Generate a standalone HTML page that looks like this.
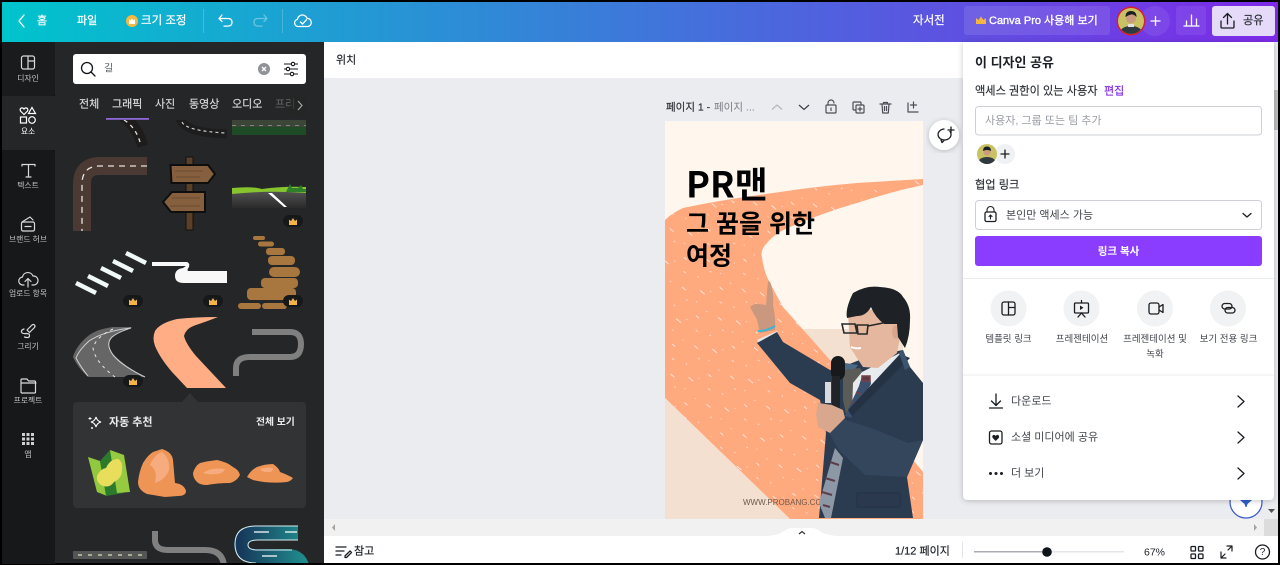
<!DOCTYPE html>
<html lang="ko"><head><meta charset="utf-8"><title>Canva</title>
<style>
html,body{margin:0;padding:0;background:#000;width:1280px;height:565px;overflow:hidden}
svg{display:block;font-family:"Liberation Sans","Noto Sans CJK KR",sans-serif}
text{dominant-baseline:central;transform:translateY(.6px)}
.tw{fill:#fff;stroke:#fff;stroke-width:.2;font-size:11px}
.sl{fill:#c4c5c8;font-size:7.8px;text-anchor:middle}
.tb{fill:#d6d7d9;stroke:#d6d7d9;stroke-width:.15;font-size:11px}
.k{fill:#2a2e33;stroke:#2a2e33;stroke-width:.15;font-size:11.2px}
.t{font-size:11px;fill:#42464c}
.ic{fill:none;stroke:#fff;stroke-width:1.3;stroke-linecap:round;stroke-linejoin:round}
.sb{fill:none;stroke:#d8d9db;stroke-width:1.2;stroke-linecap:round;stroke-linejoin:round}
.d{fill:none;stroke:#1a1d21;stroke-width:1.3;stroke-linecap:round;stroke-linejoin:round}
.g{fill:none;stroke:#4a4e54;stroke-width:1.2;stroke-linecap:round;stroke-linejoin:round}
</style></head><body>
<svg width="1280" height="565" viewBox="0 0 1280 565" xmlns="http://www.w3.org/2000/svg">
<defs>
<linearGradient id="top" x1="0" x2="1" y1="0" y2="0"><stop offset="0" stop-color="#00c4cc"/><stop offset="1" stop-color="#7d2ae8"/></linearGradient>
<linearGradient id="road" x1="0" x2="1" y1="0" y2="0"><stop offset="0" stop-color="#173a5c"/><stop offset="1" stop-color="#1f8a8c"/></linearGradient>
<linearGradient id="land" x1="0" x2="0" y1="0" y2="1"><stop offset="0" stop-color="#555"/><stop offset="1" stop-color="#2a2a2b"/></linearGradient>
<clipPath id="panelclip"><rect x="55" y="120" width="269" height="443"/></clipPath>
<clipPath id="pg"><rect x="665" y="121" width="258" height="398"/></clipPath>
<clipPath id="av1"><circle cx="1131" cy="21" r="13"/></clipPath>
<clipPath id="av2"><circle cx="987" cy="154" r="10"/></clipPath>
<filter id="sh" x="-10%" y="-10%" width="120%" height="120%"><feDropShadow dx="0" dy="1" stdDeviation="3" flood-color="#000" flood-opacity=".22"/></filter>
<pattern id="spk" width="47" height="37" patternUnits="userSpaceOnUse" patternTransform="rotate(40)"><g fill="#fff" opacity=".75"><rect x="2" y="3" width="5" height=".9"/><rect x="13" y="10" width="2" height=".8"/><rect x="22" y="5" width="1.200" height=".8"/><rect x="31" y="16" width="4" height=".9"/><rect x="7" y="22" width="1.500" height=".8"/><rect x="40" y="27" width="3" height=".8"/><rect x="18" y="31" width="6" height=".9"/><rect x="36" y="6" width="1.200" height=".8"/><rect x="26" y="25" width="1.200" height=".8"/></g></pattern>
</defs>
<rect width="1280" height="565" fill="#000"/>
<!-- top bar -->
<rect x="2" y="2" width="1276" height="40" fill="url(#top)"/>
<path class="ic" d="M24 15l-5 6 5 6" stroke-width="1.6"/>
<text x="42" y="20.500" text-anchor="middle" class="tw">홈</text>
<text x="77" y="20.500" class="tw">파일</text>
<circle cx="132" cy="21" r="6" fill="#f4b840"/><path d="M129 24v-5l1.500 1.500 1.500-2 1.500 2 1.500-1.500v5z" fill="#fff"/>
<text x="141" y="20.500" class="tw" style="font-size:11.500px">크기 조정</text>
<rect x="203" y="9" width="1" height="24" fill="#fff" opacity=".2"/>
<path class="ic" d="M222 15l-3 3.500 3 3M219.500 18.500h8.500q4 0 4 3.800t-4 3.800h-4"/>
<path class="ic" d="M264 15l3 3.500-3 3M266.500 18.500h-8.500q-4 0-4 3.800t4 3.800h4" opacity=".35"/>
<rect x="282" y="9" width="1" height="24" fill="#fff" opacity=".2"/>
<path class="ic" d="M299 26.500h-1a3.600 3.600 0 0 1-.6-7.100 5 5 0 0 1 9.700-1 4.100 4.100 0 0 1 1 8.100zM300.500 22l2 2 4-4.300"/>
<text x="913" y="20.500" class="tw" style="font-size:11.500px">자서전</text>
<rect x="964" y="6" width="146" height="29" rx="3" fill="#fff" opacity=".1"/>
<path d="M976 24v-6l2.500 2 2.500-3.500 2.500 3.500 2.500-2v6z" fill="#f5b53f"/>
<text x="989" y="20.500" class="tw" style="font-size:11px;stroke-width:.35">Canva Pro 사용해 보기</text>
<circle cx="1155" cy="21" r="15" fill="#fff" opacity=".08"/>
<path class="ic" d="M1151 21h9M1155.500 16.500v9"/>
<circle cx="1131" cy="21" r="14.500" fill="#d8202c"/>
<g clip-path="url(#av1)"><rect x="1117" y="7" width="28" height="28" fill="#c9c265"/><path d="M1118 36q2-10 13-10t13 10z" fill="#2f3a40"/><circle cx="1131" cy="18.500" r="5" fill="#c99c7e"/><path d="M1125.500 17q0-6 5.500-6t5.500 6q-3-3-5.500-2.500t-5.500 2.500z" fill="#1c1f22"/><rect x="1128" y="24" width="6" height="3" fill="#dfe2e6"/></g>
<rect x="1176" y="6" width="30" height="29" rx="3" fill="#fff" opacity=".08"/>
<path class="ic" d="M1184 26h15M1186.500 26v-5M1191.500 26v-11M1196.500 26v-7"/>
<rect x="1212" y="6" width="63" height="30" rx="3" fill="#e5dbf9"/>
<path class="d" d="M1221 21v6q0 1 1 1h11q1 0 1-1v-6M1227.500 24v-10M1223.500 17.500l4-4 4 4"/>
<text x="1243" y="20.500" class="k">공유</text>
<!-- sidebar -->
<rect x="2" y="42" width="53" height="521" fill="#101214"/>
<path d="M2 42h53v50q0 4-4 4H2z" fill="#1a1b1d"/>
<rect x="2" y="96" width="53" height="54" fill="#252627"/>
<path d="M2 150h49q4 0 4 4v410H2z" fill="#17181a"/>
<rect x="55" y="42" width="269" height="521" fill="#252627"/>
<g class="sb"><rect x="21.500" y="56" width="13" height="13" rx="2"/><path d="M28 56v13M28 61h6.500"/></g>
<text x="28" y="78" class="sl">디자인</text>
<g fill="none" stroke="#fff" stroke-width="1.200"><path d="M24 114.500l-3.500-3.500q-1-2.500 1-3 1.500-.5 2.500 1 1-1.500 2.500-1 2 .5 1 3z"/><path d="M32 107.500l3.500 6h-7z"/><rect x="20.500" y="117" width="6" height="6"/><circle cx="32" cy="120" r="3.300"/></g>
<text x="28" y="131" class="sl" style="fill:#fff">요소</text>
<g class="sb"><path d="M22 166v-1.500h13v1.500M28.500 164.500v12.500M26 177h5"/></g>
<text x="28" y="185" class="sl">텍스트</text>
<g class="sb"><rect x="21.500" y="222" width="13" height="9" rx="1.500"/><path d="M22 222l8-5 3 3M25 226.500h6"/></g>
<text x="28" y="239" class="sl">브랜드 허브</text>
<g class="sb"><path d="M24 285h-1a4 4 0 0 1-.5-8 5.500 5.500 0 0 1 10.500-1 4.500 4.500 0 0 1 1 9h-2M28 287v-8M25 281.500l3-3 3 3"/></g>
<text x="28" y="293" class="sl">업로드 항목</text>
<g class="sb"><path d="M27 330l5-5q1.500-1 2.500 0t0 2.500l-5 5zM24 329q-3 1-2.500 3t5 1.500q3.500 0 3 2.500t-5 1"/></g>
<text x="28" y="346" class="sl">그리기</text>
<g class="sb"><path d="M21 392v-12q0-1 1-1h5l1.500 2h6q1 0 1 1v10q0 1-1 1H22q-1 0-1-1zM21 383h15"/></g>
<text x="28" y="400" class="sl">프로젝트</text>
<g fill="#cfd0d2"><rect x="22" y="433" width="3" height="3"/><rect x="26.500" y="433" width="3" height="3"/><rect x="31" y="433" width="3" height="3"/><rect x="22" y="437.500" width="3" height="3"/><rect x="26.500" y="437.500" width="3" height="3"/><rect x="31" y="437.500" width="3" height="3"/><rect x="22" y="442" width="3" height="3"/><rect x="26.500" y="442" width="3" height="3"/><rect x="31" y="442" width="3" height="3"/></g>
<text x="28" y="454" class="sl">앱</text>
<!-- search -->
<rect x="73" y="54" width="233" height="30" rx="3" fill="#fff"/>
<circle cx="87" cy="68" r="5.500" fill="none" stroke="#14171a" stroke-width="1.300"/><path d="M91 72l4 4" stroke="#14171a" stroke-width="1.300" stroke-linecap="round"/>
<text x="104" y="68.500" style="font-size:10px;fill:#555a60">길</text>
<circle cx="264" cy="69" r="6" fill="#8f9297"/><path d="M262 67l4 4M266 67l-4 4" stroke="#fff" stroke-width="1.300"/>
<g stroke="#14171a" stroke-width="1.100" fill="#fff"><path d="M284 64h14M284 69h14M284 74h14"/><circle cx="293" cy="64" r="1.700"/><circle cx="288" cy="69" r="1.700"/><circle cx="292" cy="74" r="1.700"/></g>
<!-- tabs -->
<text x="79" y="104" class="tb">전체</text>
<text x="112" y="104" class="tb" style="fill:#e8e8ea">그래픽</text>
<text x="155" y="104" class="tb">사진</text>
<text x="189" y="104" class="tb">동영상</text>
<text x="232" y="104" class="tb">오디오</text>
<text x="275" y="104" class="tb" style="fill:#67686b;stroke:none">프리</text>
<rect x="290" y="95" width="16" height="20" fill="#252627" opacity=".6"/>
<path d="M298 101l4 4.500-4 4.500" fill="none" stroke="#a8a9ab" stroke-width="1.100"/>
<rect x="106" y="118" width="43" height="1.800" fill="#8d68d8"/>
<!-- graphics -->
<g clip-path="url(#panelclip)">
<path d="M122 116q14 8 21 30" stroke="#1e1b1b" stroke-width="11" fill="none"/>
<path d="M124 120q13 8 17 26" stroke="#ddd" stroke-width="1.300" stroke-dasharray="4 4" fill="none"/>
<path d="M180 118q4 15 47 16" stroke="#1d1d1d" stroke-width="9" fill="none"/>
<path d="M182 122q4 9 44 11" stroke="#ccc" stroke-width="1.200" stroke-dasharray="3 3" fill="none"/>
<rect x="232" y="120" width="74" height="15" fill="#3b4538"/>
<rect x="232" y="127" width="74" height="8" fill="#1f4a26"/>
<path d="M232 125.500h74" stroke="#999" stroke-dasharray="4 5" stroke-width=".8"/>
<path d="M147 166H100Q82 166 82 184V231" fill="none" stroke="#4a3a33" stroke-width="18"/>
<path d="M147 166H100Q82 166 82 184V231" fill="none" stroke="#e8e4e0" stroke-width="1.300" stroke-dasharray="6 5"/>
<rect x="186" y="157" width="7" height="73" fill="#5a4026" stroke="#111" stroke-width="1"/>
<path d="M170.500 165H208l7 9-7 9h-36.500z" fill="#86603e" stroke="#0e0e0e" stroke-width="2"/>
<path d="M172 192h33v20h-34l-8-10z" fill="#86603e" stroke="#0e0e0e" stroke-width="2"/>
<path d="M175 171h28M176 177h24M172 198h28M170 206h30" stroke="#6a4a2e" stroke-width="1"/>
<rect x="232" y="190" width="74" height="18" fill="url(#land)"/>
<path d="M232 188q20-2 30 1 20-3 44-2v6q-36-3-74 1z" fill="#86c52d"/>
<path d="M290 184l2 4h6l3-3 2 4h3v3h-20z" fill="#2f7f2b"/>
<path d="M268 193l16 14h3l-15-14z" fill="#fff"/>
<g stroke="#f0f8f8" stroke-width="4.500"><path d="M76 283l20 10"/><path d="M88 276l20 10"/><path d="M101 268l20 10"/><path d="M113 261l20 10"/><path d="M126 253l20 10"/></g>
<path d="M152 262h35q3 1 2 5-3 4 0 4h38v12H184q-9 0-9-7t8-8l3-2h-34z" fill="#f8f8f8"/>
<g fill="#a8763f"><rect x="253" y="236" width="12" height="4" rx="2"/><rect x="258" y="241.500" width="16" height="5" rx="2.500"/><rect x="266" y="248" width="19" height="7" rx="3"/><rect x="268" y="256" width="27" height="9" rx="4"/><rect x="269" y="267" width="31" height="10" rx="5"/><rect x="261" y="278" width="37" height="10" rx="4"/><rect x="247" y="288" width="49" height="12" rx="4"/><rect x="238" y="303" width="23" height="6" rx="3"/><rect x="262" y="303" width="25" height="6" rx="3"/></g>
<path d="M133 327H113Q97 329 88 336 76 346 73 357 78 368 88 377H145Q125 366 115 356 106 346 111 339 118 331 133 327z" fill="#666"/>
<path d="M131 328Q104 331 89 341 79 350 76 358 80 366 88 376M145 377Q122 366 113 355 105 344 112 337 118 332 131 328" fill="none" stroke="#cfcfcf" stroke-width="1"/>
<path d="M113 329Q96 337 93 348 95 362 115 377" fill="none" stroke="#e8e8e8" stroke-width="1" stroke-dasharray="3 4"/>
<path d="M218 317Q195 317 177 319 160 323 155 331 152 338 155 346 160 358 172 372L187 388H226L196 356Q186 344 184 336 186 328 196 325 208 321 218 317z" fill="#ffad85"/>
<path d="M252 332H290Q301 332 301 344Q301 357 290 357H250Q236 357 236 368V376" fill="none" stroke="#7f7f7f" stroke-width="6"/>
<rect x="73" y="551" width="74" height="8" rx="1" fill="#555"/>
<path d="M78 555h65" stroke="#a6ad96" stroke-width="2" stroke-dasharray="4 6"/>
<path d="M155 531V540Q155 550 168 550H205Q222 550 224 565" fill="none" stroke="#808080" stroke-width="6"/>
<path d="M298 533H258Q241 533 241 544Q241 556 258 556H288Q301 556 303 570" fill="none" stroke="url(#road)" stroke-width="14"/>
<path d="M298 526H256Q235 526 235 544Q235 563 256 563M298 540H258Q248 540 248 545Q248 550 258 550H292" fill="none" stroke="#d6eef0" stroke-width="1"/>
<path d="M254 532h15M285 532h12M262 556h15" stroke="#fff" stroke-width="1.200"/>
</g>
<!-- crown badges -->
<g>
<rect x="123" y="295" width="20" height="12" rx="6" fill="#17181a"/><path d="M129 305v-5.500l2 1.500 2-3 2 3 2-1.500v5.500z" fill="#f2b34a"/>
<rect x="203" y="295" width="20" height="12" rx="6" fill="#17181a"/><path d="M209 305v-5.500l2 1.500 2-3 2 3 2-1.500v5.500z" fill="#f2b34a"/>
<rect x="283" y="295" width="20" height="12" rx="6" fill="#17181a"/><path d="M289 305v-5.500l2 1.500 2-3 2 3 2-1.500v5.500z" fill="#f2b34a"/>
<rect x="283" y="215" width="20" height="12" rx="6" fill="#17181a"/><path d="M289 225v-5.500l2 1.500 2-3 2 3 2-1.500v5.500z" fill="#f2b34a"/>
<rect x="123" y="375" width="20" height="12" rx="6" fill="#17181a"/><path d="M129 385v-5.500l2 1.500 2-3 2 3 2-1.500v5.500z" fill="#f2b34a"/>
</g>
<!-- recommendation -->
<path d="M182 402l8-9 8 9z" fill="#323335"/>
<rect x="73" y="402" width="233" height="106" rx="4" fill="#323335"/>
<path d="M96 417q1 4 5 5-4 1-5 5-1-4-5-5 4-1 5-5z" fill="none" stroke="#fff" stroke-width="1.100"/>
<path d="M90 417v3M88.500 418.500h3M92 427v2M91 428h2" stroke="#fff" stroke-width=".9"/>
<text x="109" y="422" style="font-size:11px;font-weight:700;fill:#ececec">자동 추천</text>
<text x="256" y="422" style="font-size:9.800px;font-weight:700;fill:#ececec">전체 보기</text>
<path d="M88 457l12 4 7 35-10-4z" fill="#92c83e"/>
<path d="M100 461l10-11 7 3 7 40-18 3z" fill="#2c7a2c"/>
<path d="M110 450l14 5 6 37-13 1z" fill="#96ca40"/>
<path d="M97 476q3-7 9-8 4-9 12-9 5 2 4 11 0 8-8 12-4 6-11 4-7-3-6-10z" fill="#e8de5c"/>
<path d="M162 449Q172 452 173 460L175 483Q184 484 186 491 186 496 178 496L165 497 147 494Q138 490 138 482 139 472 143 463 148 455 153 452z" fill="#ee9455"/>
<path d="M162 452Q170 458 169 470 165 480 155 483 158 470 150 465 154 455 162 452z" fill="#f6ac7e"/>
<path d="M193 473Q195 466 200 463 208 461 217 460 227 462 233 467 239 470 240 475 237 481 230 483 218 483 207 485 200 485 197 482 193 478 193 473z" fill="#ee9455"/>
<path d="M203 473q8-6 22-4-2 5-10 5-6 1-12-1z" fill="#f6ac7e"/>
<path d="M247 477Q251 470 257 467 265 464 273 464 279 468 280 472 288 475 293 478 291 481 287 482 270 484 253 480z" fill="#ee9455"/>
<path d="M260 469q7-2 13-1 0 4-4 4-6 1-9-3z" fill="#f6ac7e"/>
<!-- collapse handle -->
<path d="M324 270q2 10 7 15 3 3 3 8v22q0 5-3 8-5 5-7 12z" fill="#252627"/>
<path d="M329 299l-2.500 3 2.500 3" stroke="#fff" stroke-width="1.100" fill="none"/>
<!-- canvas -->
<rect x="324" y="42" width="950" height="36" fill="#fff"/>
<rect x="324" y="78" width="950" height="441" fill="#ebecf0"/>
<text x="336" y="60" style="font-size:11px;fill:#20242a;stroke:#20242a;stroke-width:.15">위치</text>
<text x="666" y="107" style="font-size:10.500px;fill:#30343a;stroke:#30343a;stroke-width:.2">페이지 1 -</text>
<text x="714" y="107" style="font-size:10.500px;fill:#7a7e84">페이지 ...</text>
<path d="M772 109.500l5-4.500 5 4.500" fill="none" stroke="#b4b6bb" stroke-width="1.200"/>
<path d="M799 105l5 4.500 5-4.500" fill="none" stroke="#3a3e44" stroke-width="1.200"/>
<g class="g"><rect x="826" y="105" width="10" height="8" rx="1"/><path d="M828 105v-2a3 3 0 0 1 6 0M831 108v2.500"/>
<rect x="853" y="102" width="8" height="8" rx="1"/><rect x="856" y="105" width="8" height="8" rx="1" fill="#ebecf0"/><path d="M860 107v4M858 109h4"/>
<path d="M880 104h11M882 104l.7 9h5.600l.7-9M883.500 104v-1.500h4v1.500M884.500 106.500v4M886.500 106.500v4"/>
<path d="M908 103v9h10M913.500 102v6M910.500 105h6"/></g>
<!-- page art -->
<g clip-path="url(#pg)">
<rect x="665" y="121" width="258" height="398" fill="#fff7ee"/>
<rect x="803" y="329" width="100" height="70" fill="#f3e0d0"/>
<path d="M665 220Q672 213 683 208 720 200 773 193 820 186 857 183L923 179V185Q890 192 857 203 825 212 790 227 775 233 767 243 760 250 762 257 763 267 767 277 775 293 783 307L830 360 923 472V519H790L665 398z" fill="#ffa97e"/>
<path d="M665 220Q672 213 683 208 720 200 773 193 820 186 857 183L923 179V185Q890 192 857 203 825 212 790 227 775 233 767 243 760 250 762 257 763 267 767 277 775 293 783 307L830 360 923 472V519H790L665 398z" fill="url(#spk)"/>
<path d="M665 398L790 519H665z" fill="#f3e0d0"/>
<text x="686" y="182" style="font-family:'Noto Sans CJK KR','Liberation Sans',sans-serif;font-size:36px;font-weight:700;fill:#000">PR맨</text>
<text x="686" y="222" style="font-family:'Noto Sans CJK KR',sans-serif;font-size:25px;font-weight:700;fill:#000">그 꿈을 위한</text>
<text x="686" y="254" style="font-family:'Noto Sans CJK KR',sans-serif;font-size:25px;font-weight:700;fill:#000">여정</text>
<text x="743" y="502" style="font-size:8px;fill:#6e5a4c">WWW.PROBANG.COM</text>
<!-- man -->
<path d="M768 281q3 0 4 8 2 9 1 16 3 14 2 25l-15 3-3-13-7-13q5-4 9-3l7 1z" fill="#c9987f"/>
<path d="M758 331q9 0 17-5" stroke="#39b5d6" stroke-width="2" fill="none"/>
<path d="M757 340l20-9 1 3-19 9z" fill="#e6e8ea"/>
<path d="M757 343l20-11 6 10 47 28 17-5 20-8 36-7 7 17 13 16v57l-16 37 6 41H819l7-85-6-33-30-17z" fill="#2c3c50"/>
<path d="M829 433l11-15 31 10 37 15 15-3-16 37-42-2-26-25z" fill="#33465c"/>
<path d="M845 363l13 2-6 8-10 4z" fill="#4a6a88"/>
<path d="M843 370l17-2 6 10-12 30-8 6-3-14z" fill="#5b5b57"/>
<path d="M853 383l9-11 38-19 2 7-30 25-20 27z" fill="#e7ebee"/>
<path d="M862 376h8l1 8-20 34-6-2 14-30z" fill="#3b506e"/>
<path d="M862 376h8v5h-8zM856 392l6 3M851 402l6 3" stroke="#7a4048" stroke-width="1.500" fill="#5d3c46"/>
<path d="M900 354l10 4-58 58-4-6z" fill="#243243"/>
<path d="M903 350l7 17-5 3-6-17z" fill="#3b5470"/>
<path d="M835 448l-16 55 6 15h6l12-60z" fill="#8d98a6"/>
<path d="M830 462l9 3M825 478l10 3M822 492l10 3M823 505l7 2" stroke="#5c3e4a" stroke-width="2"/>
<path d="M848 313L850 347 857 358 863 367 878 368 897 353 902 327 887 307z" fill="#e4b79e"/>
<ellipse cx="896" cy="332" rx="4" ry="7" fill="#d8a68c"/>
<path d="M847 318Q845 309 853 293 866 285 880 287 898 288 903 297 911 306 910 320 910 336 905 348 901 342 898 337L897 324H884Q875 317 871 307 866 316 857 316z" fill="#1e2226"/>
<path d="M842 324h13l2 9h-13zM857 325h11l-1 9h-9zM868 326l15-3M855 327l2 0" fill="none" stroke="#26282a" stroke-width="1.600"/>
<path d="M851 347q5 2 10 1" stroke="#fff" stroke-width="2"/>
<rect x="831" y="356" width="14" height="24" rx="7" fill="#17191c"/>
<rect x="832" y="376" width="8" height="32" fill="#202327"/>
<rect x="825" y="382" width="6" height="21" fill="#d8dadd"/>
<path d="M818 403l14 2 11 5 2 8-15 15-12-6-2-13z" fill="#d9a78e"/>
<rect x="857" y="493" width="43" height="14" fill="#2a394d" stroke="#243143"/>
</g>
<!-- comment fab -->
<circle cx="944" cy="135" r="15" fill="#fff" filter="url(#sh)"/>
<path class="d" d="M950 131.500a6.500 5.500 0 1 1-6-2.500M941 140l1 2.500 2-2M951 127v6M948 130h6" stroke-width="1.200"/>
<!-- floating circle -->
<circle cx="1246" cy="502" r="16" fill="#fff" stroke="#3a5bd0" stroke-width="1.300"/>
<path d="M1240 500h12l-4.500 4-1 3h-1l-1-3z" fill="#2f5fc8"/>
<!-- scrollbars -->
<rect x="324" y="519" width="940" height="17" fill="#f1f1f1"/>
<rect x="1264" y="519" width="14" height="17" fill="#dcdcdc"/>
<path d="M335 524v7l-3-3.500z" fill="#a3a3a3"/><path d="M1254 524v7l3-3.500z" fill="#a3a3a3"/>
<rect x="1274" y="42" width="4" height="477" fill="#e8e9ed"/>
<rect x="1274" y="90" width="4" height="40" fill="#bdbdbd"/>
<path d="M1268 509h7l-3.500 4z" fill="#505050"/>
<!-- bottom bar -->
<rect x="324" y="536" width="954" height="27" fill="#fff"/>
<path d="M767 536q12-1 17-5 4-3 8-3h20q4 0 8 3 5 4 17 5z" fill="#fff"/>
<path d="M799 534l3-2.500 3 2.500" fill="none" stroke="#333" stroke-width="1.200"/>
<path class="d" d="M336 547h10M336 551h8M336 555h5M345 556l5-5 1.500 1.500-5 5h-1.500z" stroke-width="1.100"/>
<text x="354" y="551" style="font-size:11px;fill:#20242a;stroke:#20242a;stroke-width:.2">참고</text>
<text x="895" y="551" style="font-size:11px;fill:#20242a;stroke:#20242a;stroke-width:.2">1/12 페이지</text>
<rect x="962" y="542" width="1" height="16" fill="#e5e6ea"/>
<rect x="974" y="551" width="73" height="1.500" fill="#a9adb3"/>
<rect x="1047" y="551" width="77" height="1.500" fill="#e4e5e9"/>
<circle cx="1047" cy="552" r="4.800" fill="#0e1318"/>
<text x="1144" y="552" style="font-size:10.500px;fill:#20242a">67%</text>
<g class="d"><rect x="1191" y="546.500" width="4.500" height="4.500" rx=".8"/><rect x="1198.500" y="546.500" width="4.500" height="4.500" rx=".8"/><rect x="1191" y="554" width="4.500" height="4.500" rx=".8"/><rect x="1198.500" y="554" width="4.500" height="4.500" rx=".8"/>
<path d="M1221 552v6h5M1221 558l4-4M1232 546h-5M1232 546v5M1232 546l-4 4" stroke-width="1.200"/>
<circle cx="1262.500" cy="552" r="7"/></g>
<text x="1262.500" y="552" text-anchor="middle" style="font-size:10px;fill:#1a1d21">?</text>
<!-- share panel -->
<path d="M963 42h311v453q0 5-5 5H968q-5 0-5-5z" fill="#fff" filter="url(#sh)"/>
<text x="975" y="62" style="font-size:13px;font-weight:700;fill:#1b1f24">이 디자인 공유</text>
<text x="975" y="91" class="k">액세스 권한이 있는 사용자</text>
<text x="1104" y="91" style="font-size:11px;fill:#7d2ae8;stroke:#7d2ae8;stroke-width:.15">편집</text>
<rect x="975.500" y="106.500" width="286" height="28.500" rx="3" fill="#fff" stroke="#ced0d6"/>
<text x="985" y="120.500" style="font-size:11px;fill:#9a9da3">사용자, 그룹 또는 팀 추가</text>
<circle cx="1005" cy="154" r="10" fill="#f0f1f4"/>
<path class="d" d="M1001 154h8M1005 150v8"/>
<g clip-path="url(#av2)"><rect x="977" y="144" width="20" height="20" fill="#c9c265"/><path d="M977 164q2-7 10-7t10 7z" fill="#2f3a40"/><circle cx="987" cy="152" r="3.600" fill="#c99c7e"/><path d="M983 151q0-4.500 4-4.500t4 4.500q-4-2-8 0z" fill="#1c1f22"/></g>
<text x="975" y="185" class="k">협업 링크</text>
<rect x="975.500" y="200.500" width="286" height="29" rx="3" fill="#fff" stroke="#ced0d6"/>
<g class="d"><rect x="985" y="212" width="11" height="9.500" rx="1.500"/><path d="M987 212v-2a3.500 3.500 0 0 1 7 0v2M990.500 215v4M989 216.500l1.500-1.500 1.500 1.500" stroke-width="1.100"/></g>
<text x="1006" y="215" class="t">본인만 액세스 가능</text>
<path class="d" d="M1243 213.500l4 3.500 4-3.500"/>
<rect x="975" y="236" width="287" height="30" rx="3" fill="#8b3dff"/>
<text x="1118.500" y="251" text-anchor="middle" style="font-size:10.500px;font-weight:700;fill:#fff">링크 복사</text>
<rect x="963" y="278" width="311" height="1" fill="#eceded"/>
<circle cx="1008.500" cy="308.500" r="18" fill="#f1f2f4"/><circle cx="1081.500" cy="308.500" r="18" fill="#f1f2f4"/><circle cx="1155" cy="308.500" r="18" fill="#f1f2f4"/><circle cx="1228" cy="308.500" r="18" fill="#f1f2f4"/>
<g class="d"><rect x="1002" y="302" width="13" height="13" rx="2"/><path d="M1008.500 302v13M1008.500 307.500h6.500"/>
<rect x="1074.500" y="303" width="14" height="10" rx="1"/><path d="M1081.500 300.500v2.500M1081.500 313l-3.500 4M1081.500 313l3.500 4"/>
<rect x="1149" y="303" width="10" height="11" rx="2"/><path d="M1159 307l4-2.500v8l-4-2.500"/>
<rect x="1222" y="303.500" width="10" height="5.500" rx="2.750"/><rect x="1225" y="307.500" width="10" height="5.500" rx="2.750"/></g>
<path d="M1080 305.500v4.500l3.500-2.200z" fill="#1a1d21"/>
<g style="font-size:9.500px;fill:#42464c" text-anchor="middle"><text x="1008.500" y="339">템플릿 링크</text><text x="1082" y="339">프레젠테이션</text><text x="1155" y="339">프레젠테이션 및</text><text x="1155" y="354">녹화</text><text x="1228.500" y="339">보기 전용 링크</text></g>
<rect x="963" y="374.500" width="311" height="1" fill="#eceded"/>
<path class="d" d="M996 394v11M991.500 401l4.500 4.500 4.500-4.500M989.500 408h13"/>
<text x="1011" y="401" class="t">다운로드</text>
<path class="d" d="M1238 396l6 5.500-6 5.500"/>
<rect x="989.500" y="431" width="12.500" height="13" rx="2" fill="none" stroke="#1a1d21" stroke-width="1.300"/>
<path d="M995.700 441l-3-3q-1-2 .5-3 1.500-.6 2.500 1 1-1.600 2.500-1 1.500 1 .5 3z" fill="#1a1d21"/>
<text x="1011" y="437" class="t">소셜 미디어에 공유</text>
<path class="d" d="M1238 432l6 5.500-6 5.500"/>
<circle cx="990.500" cy="473.500" r="1.500" fill="#1a1d21"/><circle cx="996" cy="473.500" r="1.500" fill="#1a1d21"/><circle cx="1001.500" cy="473.500" r="1.500" fill="#1a1d21"/>
<text x="1011" y="473" class="t">더 보기</text>
<path class="d" d="M1238 468l6 5.500-6 5.500"/>
</svg>
</body></html>
